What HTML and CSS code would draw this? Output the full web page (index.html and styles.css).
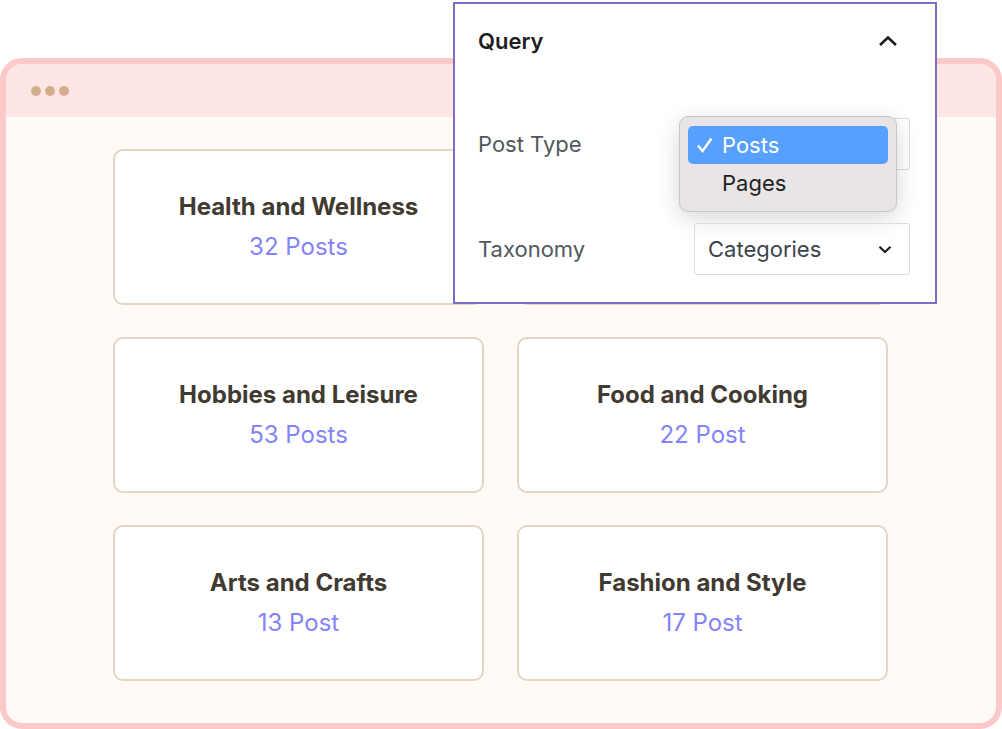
FILE: index.html
```html
<!DOCTYPE html>
<html lang="en"><head>
  <meta name="viewport" content="width=device-width, initial-scale=1.0">
  <title>Query Loop Categories</title>
  <link rel="stylesheet" href="styles.css">
</head>
<body>
  <!-- Browser window with category cards -->
  <div class="window">
    <div class="window-bar">
      <span class="dot"></span>
      <span class="dot"></span>
      <span class="dot"></span>
    </div>
    <div class="window-body">
      <div class="cat-grid">
        <div class="cat-card">
          <div class="cat-title">Health and Wellness</div>
          <div class="cat-count">32 Posts</div>
        </div>
        <!-- covered by the query panel -->
        <div class="cat-card"></div>
        <div class="cat-card">
          <div class="cat-title">Hobbies and Leisure</div>
          <div class="cat-count">53 Posts</div>
        </div>
        <div class="cat-card">
          <div class="cat-title">Food and Cooking</div>
          <div class="cat-count">22 Post</div>
        </div>
        <div class="cat-card">
          <div class="cat-title">Arts and Crafts</div>
          <div class="cat-count">13 Post</div>
        </div>
        <div class="cat-card">
          <div class="cat-title">Fashion and Style</div>
          <div class="cat-count">17 Post</div>
        </div>
      </div>
    </div>
  </div>

  <!-- Query settings panel -->
  <div class="query-panel">
    <div class="panel-head">
      <span class="panel-title">Query</span>
      <svg class="chev-up" width="20" height="12" viewBox="0 0 20 12">
        <path d="M2 10 L10 2.5 L18 10" fill="none" stroke="#1e1e1e" stroke-width="2.6"/>
      </svg>
    </div>

    <div class="field-row">
      <span class="field-label">Post Type</span>
      <div class="select-box">
        <div class="dropdown">
          <div class="opt opt-active">
            <svg class="tick" width="18" height="18" viewBox="0 0 18 18">
              <path d="M2 9.5 L6.5 15 L15.5 2.5" fill="none" stroke="#ffffff" stroke-width="2.4"/>
            </svg>
            Posts
          </div>
          <div class="opt">Pages</div>
        </div>
      </div>
    </div>

    <div class="field-row">
      <span class="field-label">Taxonomy</span>
      <div class="select-box">
        <span>Categories</span>
        <svg class="chev-down" width="14" height="9" viewBox="0 0 14 9">
          <path d="M1.5 1.8 L7 7 L12.5 1.8" fill="none" stroke="#1e1e1e" stroke-width="2.2"/>
        </svg>
      </div>
    </div>
  </div>
</body>
</html>
```

FILE: styles.css
```css
  body {
    margin: 0;
    background: #ffffff;
    font-family: Inter, "Noto Sans", sans-serif;
    width: 1002px;
    height: 729px;
    position: relative;
    overflow: hidden;
  }
  .window {
    margin-top: 58px;
    height: 671px;
    box-sizing: border-box;
    border: 6px solid #fac9c8;
    border-radius: 22px;
    background: #fffaf5;
    overflow: hidden;
    display: flex;
    flex-direction: column;
  }
  .window-bar {
    height: 53px;
    background: #fee6e5;
    display: flex;
    align-items: center;
    gap: 4px;
    padding-left: 25px;
  }
  .dot {
    width: 10px;
    height: 10px;
    border-radius: 50%;
    background: #d4ad8e;
  }
  .window-body {
    padding: 32px 108px 0 107px;
  }
  .cat-grid {
    display: grid;
    grid-template-columns: 371px 371px;
    column-gap: 33px;
    row-gap: 32px;
  }
  .cat-card {
    height: 156px;
    box-sizing: border-box;
    background: #ffffff;
    border: 2px solid #e2d6c4;
    border-radius: 10px;
    display: flex;
    flex-direction: column;
    align-items: center;
    justify-content: center;
    gap: 8px;
  }
  .cat-title {
    font-size: 24px;
    font-weight: 700;
    color: #413a31;
    line-height: 32px;
  }
  .cat-count {
    font-size: 24px;
    color: #8383fb;
    line-height: 32px;
  }

  .query-panel {
    position: absolute;
    left: 453px;
    top: 2px;
    width: 484px;
    height: 302px;
    box-sizing: border-box;
    border: 2px solid #7d6dc6;
    background: #ffffff;
    padding: 0 25px 0 23px;
  }
  .panel-head {
    height: 74px;
    display: flex;
    align-items: center;
    justify-content: space-between;
    padding-right: 12px;
  }
  .panel-title {
    font-size: 22px;
    font-weight: 600;
    color: #1e1e1e;
  }
  .field-row {
    display: flex;
    align-items: center;
    justify-content: space-between;
    margin-top: 40px;
  }
  .field-row + .field-row {
    margin-top: 53px;
  }
  .field-label {
    font-size: 22px;
    color: #50575e;
  }
  .select-box {
    position: relative;
    width: 216px;
    height: 52px;
    box-sizing: border-box;
    border: 1px solid #dcdcde;
    border-radius: 3px;
    display: flex;
    align-items: center;
    justify-content: space-between;
    padding: 0 17px 0 13px;
    font-size: 22px;
    color: #3c434a;
  }
  .dropdown {
    position: absolute;
    left: -16px;
    top: -3px;
    width: 218px;
    height: 96px;
    box-sizing: border-box;
    background: #e9e5e7;
    border: 1px solid #c9c5c7;
    border-radius: 9px;
    box-shadow: 0 6px 22px rgba(0, 0, 0, 0.16);
    padding: 9px 8px;
    font-size: 22px;
    color: #222222;
  }
  .opt {
    height: 38px;
    display: flex;
    align-items: center;
    padding-left: 34px;
    border-radius: 5px;
    position: relative;
  }
  .opt-active {
    background: #58a0ff;
    color: #ffffff;
  }
  .tick {
    position: absolute;
    left: 8px;
    top: 10px;
  }
```
